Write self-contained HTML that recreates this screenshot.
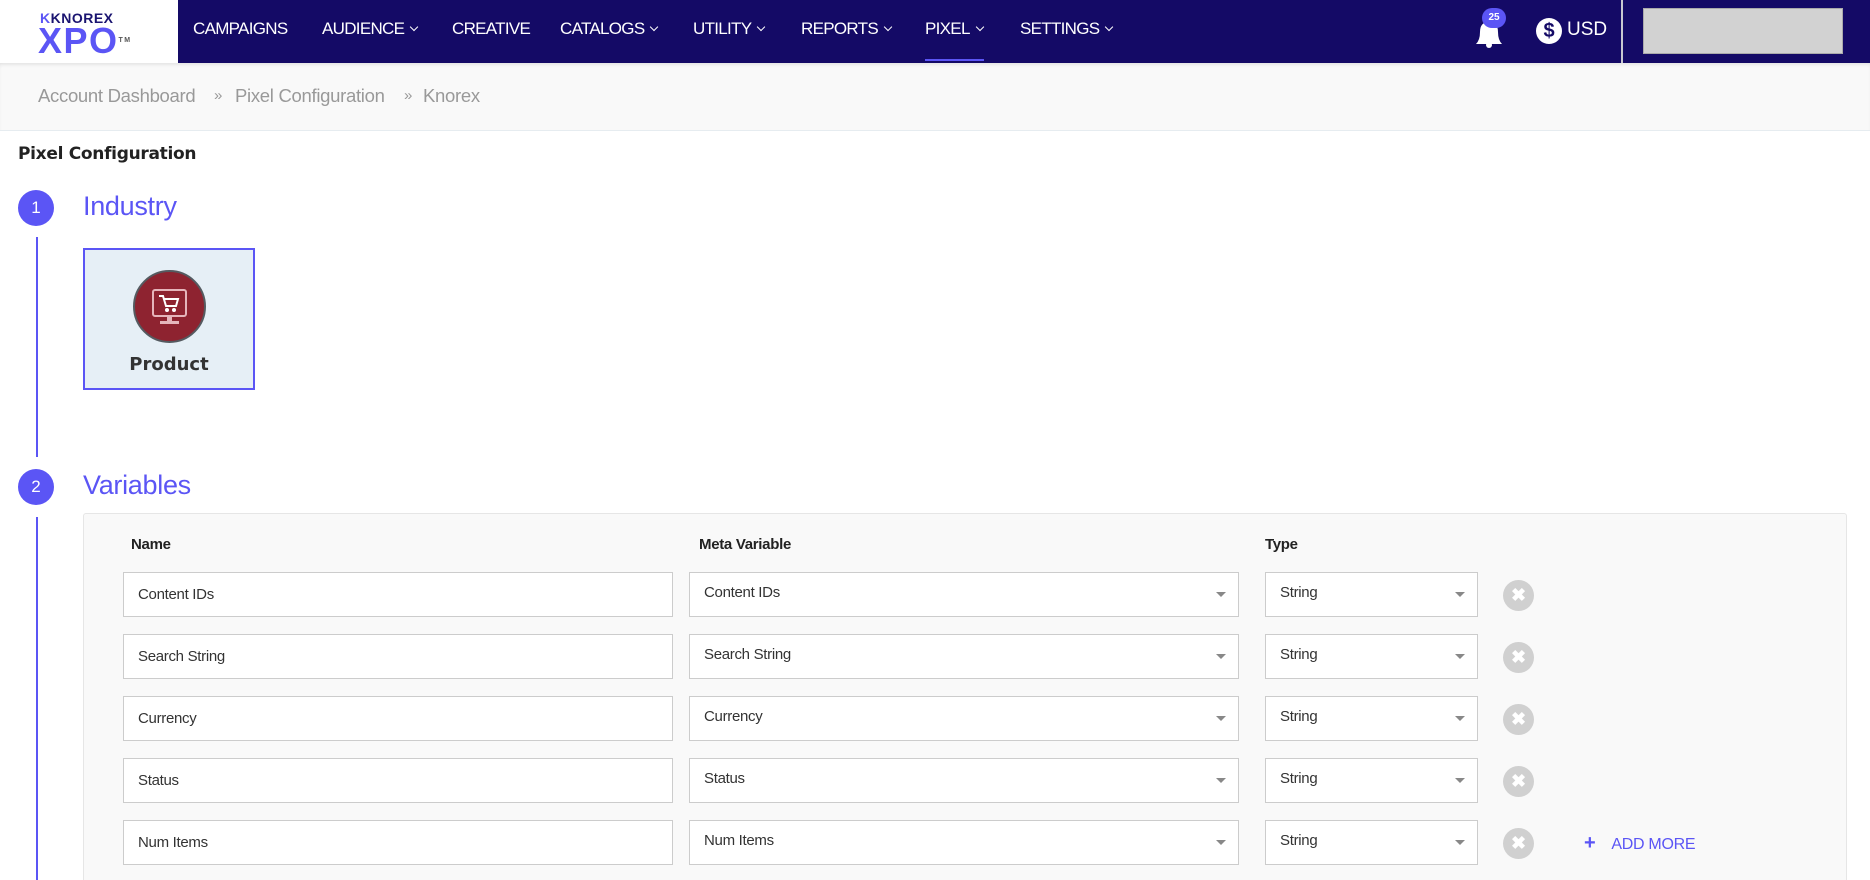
<!DOCTYPE html>
<html style="width:1870px;height:880px;overflow:hidden"><head><meta charset="utf-8">
<style>
*{box-sizing:border-box;margin:0;padding:0}
body{width:1870px;height:880px;overflow:hidden;background:#fff;font-family:"Liberation Sans",Arial,sans-serif;position:relative}
.nav{position:absolute;left:0;top:0;width:1870px;height:63px;background:#140a66}
.logo{position:absolute;left:0;top:0;width:178px;height:63px;background:#fff}
.nav a{position:absolute;top:19px;color:#fff;font-size:17px;letter-spacing:-0.7px;text-decoration:none}
.car{display:inline-block;width:6px;height:6px;border-right:1.5px solid #fff;border-bottom:1.5px solid #fff;transform:rotate(45deg);margin-left:7px;position:relative;top:-4px}
.crumb{position:absolute;left:0;top:63px;width:1870px;height:68px;background:#f9f9f9;border-bottom:1px solid #e6ecf0;box-shadow:inset 0 3px 4px -2px rgba(0,0,0,.12)}
.crumb span{position:absolute;top:22px;font-size:18.5px;color:#999;letter-spacing:-0.3px}
.circ{position:absolute;width:36px;height:36px;border-radius:50%;background:#5b55f5;color:#fff;font-size:17px;text-align:center;line-height:36px}
.vline{position:absolute;left:36px;width:1.5px;background:#5b55f5}
.h2{position:absolute;left:83px;font-size:27px;color:#5b55f5;letter-spacing:-0.3px}
.panel{position:absolute;left:83px;top:513px;width:1764px;height:380px;background:#f9f9f9;border:1px solid #e6e6e6;border-radius:3px}
.th{position:absolute;top:536px;font-size:15px;font-weight:bold;color:#222;letter-spacing:-0.3px}
.in{position:absolute;height:45px;background:#fff;border:1px solid #ccc;font-size:15px;color:#333;padding-left:14px;line-height:43px;letter-spacing:-0.3px}
.in.s{line-height:40px}
.tri{position:absolute;right:12px;top:19px;width:0;height:0;border-left:5px solid transparent;border-right:5px solid transparent;border-top:5px solid #888}
.x{position:absolute;width:31px;height:31px;border-radius:50%;background:#d0d0d0;color:#fff;font-size:18px;font-weight:bold;text-align:center;line-height:31px}
</style></head><body>
<div class="nav">
 <div class="logo">
  <div style="position:absolute;left:40px;top:10px;font-size:14px;font-weight:bold;color:#1a1470;letter-spacing:0.5px"><span style="color:#5b55f5">K</span>KNOREX</div>
  <div style="position:absolute;left:38px;top:23px;font-size:36px;font-weight:bold;color:#5b55f5;letter-spacing:1.5px;line-height:36px">XPO<span style="font-size:7px;vertical-align:top;color:#555">TM</span></div>
 </div>
 <a style="left:193px">CAMPAIGNS</a>
 <a style="left:322px">AUDIENCE<i class="car"></i></a>
 <a style="left:452px">CREATIVE</a>
 <a style="left:560px">CATALOGS<i class="car"></i></a>
 <a style="left:693px">UTILITY<i class="car"></i></a>
 <a style="left:801px">REPORTS<i class="car"></i></a>
 <a style="left:925px">PIXEL<i class="car"></i></a>
 <div style="position:absolute;left:925px;top:59px;width:59px;height:2px;background:#5b55f5"></div>
 <a style="left:1020px">SETTINGS<i class="car"></i></a>
 <svg style="position:absolute;left:1472px;top:16px" width="34" height="32" viewBox="0 0 34 32"><path d="M4 28 Q8 24 8 16 Q8 6 17 6 Q26 6 26 16 Q26 24 30 28 Z" fill="#fff"/><circle cx="17" cy="29" r="3" fill="#fff"/></svg>
 <div style="position:absolute;left:1482px;top:8px;width:24px;height:20px;border-radius:10px;background:#5b55f5;color:#fff;font-size:10px;font-weight:bold;text-align:center;line-height:20px">25</div>
 <div style="position:absolute;left:1536px;top:18px;width:26px;height:26px;border-radius:50%;background:#fff;color:#140a66;font-size:20px;font-weight:bold;text-align:center;line-height:26px">$</div>
 <div style="position:absolute;left:1567px;top:19px;color:#fff;font-size:19px">USD</div>
 <div style="position:absolute;left:1621px;top:0;width:2px;height:63px;background:#c8c8d0"></div>
 <div style="position:absolute;left:1643px;top:8px;width:200px;height:46px;background:#d2d2d2;border:1px solid #aaa"></div>
</div>
<div class="crumb">
 <span style="left:38px">Account Dashboard</span>
 <span style="left:214px;font-size:15px;top:24px">»</span>
 <span style="left:235px">Pixel Configuration</span>
 <span style="left:404px;font-size:15px;top:24px">»</span>
 <span style="left:423px">Knorex</span>
</div>
<div style="position:absolute;left:18px;top:144px;font-weight:bold;color:#222;font-family:'DejaVu Sans',sans-serif;letter-spacing:-0.3px;font-size:17px">Pixel Configuration</div>
<div class="circ" style="left:18px;top:190px">1</div>
<div class="vline" style="top:237px;height:220px"></div>
<div class="h2" style="top:191px">Industry</div>
<div style="position:absolute;left:83px;top:248px;width:172px;height:142px;background:#e6eff6;border:2px solid #5b55f5">
 <div style="position:absolute;left:48px;top:20px;width:73px;height:73px;border-radius:50%;background:#8e2330;border:2px solid #555a60">
  <svg width="69" height="69" viewBox="0 0 69 69"><rect x="18" y="18" width="33" height="26" rx="2" fill="none" stroke="#e5b5bb" stroke-width="2"/><path d="M24 24 h4 l3 10 h10 l2 -7 h-14" fill="none" stroke="#fff" stroke-width="2"/><circle cx="32" cy="38" r="2" fill="#fff"/><circle cx="39" cy="38" r="2" fill="#fff"/><rect x="32" y="44" width="5" height="5" fill="#e5b5bb"/><rect x="25" y="49" width="19" height="3" fill="#e5b5bb"/></svg>
 </div>
 <div style="position:absolute;left:0;width:168px;top:104px;text-align:center;font-size:18px;font-weight:bold;color:#333;font-family:'DejaVu Sans',sans-serif">Product</div>
</div>
<div class="circ" style="left:18px;top:469px">2</div>
<div class="vline" style="top:517px;height:363px"></div>
<div class="h2" style="top:470px">Variables</div>
<div class="panel"></div>
<div class="th" style="left:131px">Name</div>
<div class="th" style="left:699px">Meta Variable</div>
<div class="th" style="left:1265px">Type</div>

<div class="in" style="left:123px;top:572px;width:550px">Content IDs</div>
<div class="in s" style="left:689px;top:572px;width:550px">Content IDs<i class="tri"></i></div>
<div class="in s" style="left:1265px;top:572px;width:213px">String<i class="tri"></i></div>
<div class="x" style="left:1503px;top:580px">✖</div>

<div class="in" style="left:123px;top:634px;width:550px">Search String</div>
<div class="in s" style="left:689px;top:634px;width:550px">Search String<i class="tri"></i></div>
<div class="in s" style="left:1265px;top:634px;width:213px">String<i class="tri"></i></div>
<div class="x" style="left:1503px;top:642px">✖</div>

<div class="in" style="left:123px;top:696px;width:550px">Currency</div>
<div class="in s" style="left:689px;top:696px;width:550px">Currency<i class="tri"></i></div>
<div class="in s" style="left:1265px;top:696px;width:213px">String<i class="tri"></i></div>
<div class="x" style="left:1503px;top:704px">✖</div>

<div class="in" style="left:123px;top:758px;width:550px">Status</div>
<div class="in s" style="left:689px;top:758px;width:550px">Status<i class="tri"></i></div>
<div class="in s" style="left:1265px;top:758px;width:213px">String<i class="tri"></i></div>
<div class="x" style="left:1503px;top:766px">✖</div>

<div class="in" style="left:123px;top:820px;width:550px">Num Items</div>
<div class="in s" style="left:689px;top:820px;width:550px">Num Items<i class="tri"></i></div>
<div class="in s" style="left:1265px;top:820px;width:213px">String<i class="tri"></i></div>
<div class="x" style="left:1503px;top:828px">✖</div>
<div style="position:absolute;left:1584px;top:832px;color:#5b55f5;font-size:16px;letter-spacing:-0.3px"><b style="font-size:20px;margin-right:16px">+</b>ADD MORE</div>
</body></html>
